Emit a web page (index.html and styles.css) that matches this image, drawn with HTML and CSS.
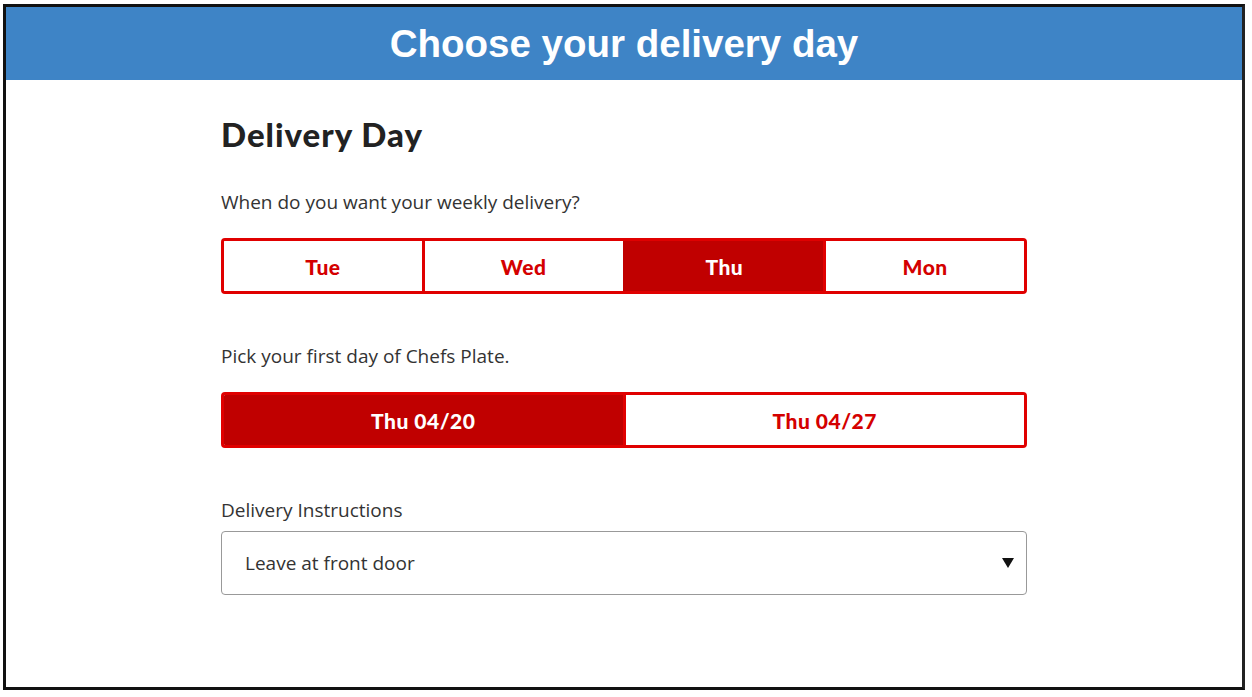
FILE: index.html
```html
<!DOCTYPE html>
<html lang="en">
<head>
    <meta charset="UTF-8">
    <title>Choose your delivery day</title>
    <link rel="stylesheet" href="styles.css">
</head>
<body>

<div class="frame">
    <div class="banner">Choose your delivery day</div>

    <div class="container">
        <h2>Delivery Day</h2>

        <!-- Weekly delivery day -->
        <p class="question">When do you want your weekly delivery?</p>
        <div class="toggle">
            <button type="button">Tue</button>
            <button type="button">Wed</button>
            <button type="button" class="active">Thu</button>
            <button type="button">Mon</button>
        </div>

        <!-- First box -->
        <p class="question">Pick your first day of Chefs Plate.</p>
        <div class="toggle">
            <button type="button" class="active">Thu 04/20</button>
            <button type="button">Thu 04/27</button>
        </div>

        <!-- Instructions -->
        <label class="question label" for="instructions">Delivery Instructions</label>
        <div class="select-box">
            <select id="instructions">
                <option>Leave at front door</option>
                <option>Leave at back door</option>
                <option>Leave with concierge</option>
            </select>
            <span class="arrow"></span>
        </div>
    </div>
</div>

</body>
</html>
```

FILE: styles.css
```css
body {
    margin: 0;
    padding: 0;
    background-color: #fff;
    font-family: "Open Sans", Arial, sans-serif;
}
.frame {
    box-sizing: border-box;
    width: 1242px;
    height: 686px;
    margin: 4px 0 0 3px;
    border: 3px solid #111;
    border-right-color: #222;
}
.banner {
    height: 73px;
    line-height: 73px;
    background-color: #3e84c6;
    color: #fff;
    text-align: center;
    font-family: "Liberation Sans", Arial, sans-serif;
    font-weight: bold;
    font-size: 38.5px;
}
.container {
    width: 806px;
    margin: 0 auto;
    padding-top: 34px;
}
h2 {
    margin: 0 0 36px;
    font-family: Lato, sans-serif;
    font-weight: 900;
    font-size: 33px;
    letter-spacing: 1px;
    line-height: 40px;
    color: #222;
}
.question {
    display: block;
    margin: 0 0 24px;
    font-size: 19px;
    line-height: 24px;
    color: #333;
}
.question.label {
    margin-bottom: 9px;
}
.toggle {
    display: flex;
    height: 56px;
    margin-bottom: 50px;
    border: 3px solid #e00000;
    border-radius: 4px;
    box-sizing: border-box;
    overflow: hidden;
}
.toggle button {
    flex: 1;
    border: none;
    border-left: 3px solid #e00000;
    background-color: #fff;
    color: #d40000;
    font-family: Lato, sans-serif;
    font-weight: 900;
    font-size: 21px;
    letter-spacing: 0.5px;
    cursor: pointer;
}
.toggle button:first-child {
    border-left: none;
}
.toggle button.active {
    background-color: #c00000;
    border-left-color: #c00000;
    color: #fff;
}
.select-box {
    position: relative;
}
.select-box select {
    display: block;
    width: 100%;
    height: 64px;
    padding: 0 23px;
    border: 1px solid #999;
    border-radius: 4px;
    background-color: #fff;
    font-family: "Open Sans", Arial, sans-serif;
    font-size: 19px;
    color: #333;
    appearance: none;
    -webkit-appearance: none;
}
.arrow {
    position: absolute;
    right: 13px;
    top: 27px;
    width: 0;
    height: 0;
    border-left: 6px solid transparent;
    border-right: 6px solid transparent;
    border-top: 10px solid #111;
    pointer-events: none;
}
```
